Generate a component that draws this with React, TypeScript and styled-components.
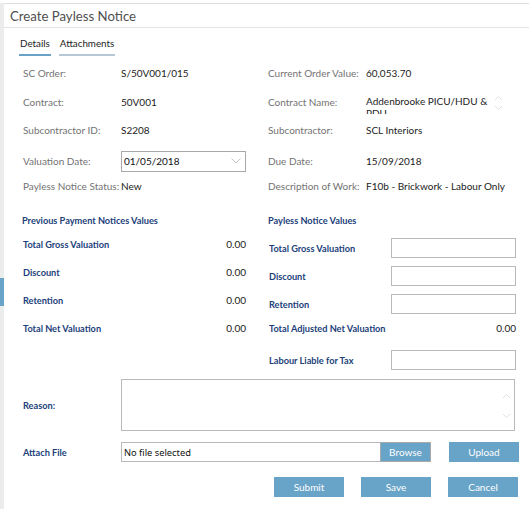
import React from "react";
import styled, { createGlobalStyle } from "styled-components";

const Global = createGlobalStyle`
  html, body { margin: 0; padding: 0; background: #fff; }
  body { font-family: Lato, "Open Sans", sans-serif; width: 529px; height: 509px; overflow: hidden; }
  * { box-sizing: border-box; }
`;

const Page = styled.div`
  position: relative;
  width: 529px;
  height: 509px;
  border-top: 1px solid #fff;
  display: flex;
`;

const SideStrip = styled.div`
  position: relative;
  width: 4px;
  margin-top: 2px;
  background: #ececec;
  flex: none;
`;

const SideTab = styled.div`
  position: absolute;
  left: 0;
  top: 275px;
  width: 4px;
  height: 28px;
  background: #6aa3c8;
`;

const Panel = styled.div`
  flex: 1;
  min-width: 0;
  margin-top: 2px;
  border-top: 1px solid #dedede;
  display: flex;
  flex-direction: column;
`;

const Header = styled.div`
  height: 24px;
  border-bottom: 1px solid #e4e4e4;
  padding-left: 6px;
  display: flex;
  align-items: center;
`;

const Title = styled.h1`
  margin: 0;
  margin-top: 1px;
  font-size: 13.2px;
  font-weight: 400;
  color: #4f4f4f;
`;

const Tabs = styled.div`
  display: flex;
  gap: 8px;
  padding-left: 15px;
  margin-top: 6px;
  height: 22px;
`;

const Tab = styled.div<{ $active?: boolean }>`
  font-size: 9.8px;
  color: #1d1d1d;
  padding: 0 1px 2px;
  border-bottom: 2px solid ${(p) => (p.$active ? "#6aa3c8" : "#b6c8d4")};
  display: flex;
  align-items: center;
  height: 22px;
`;

const InfoRow = styled.div<{ $top: number }>`
  display: flex;
  align-items: center;
  height: 20px;
  margin-top: ${(p) => p.$top}px;
  padding-left: 19px;
`;

const InfoPair = styled.div<{ $width: number }>`
  width: ${(p) => p.$width}px;
  flex: none;
  display: flex;
  align-items: center;
  height: 20px;
`;

const Label = styled.div`
  width: 98px;
  flex: none;
  font-size: 10px;
  color: #737373;
  white-space: nowrap;
`;

const Value = styled.div`
  font-size: 10px;
  color: #1c1c1c;
  white-space: nowrap;
`;

const ScrollBox = styled.div`
  position: relative;
  height: 22px;
  margin-top: 2px;
  width: 140px;
  overflow: hidden;
  font-size: 10px;
  color: #1c1c1c;
  line-height: 12px;
  padding-top: 3px;
  padding-right: 16px;
`;

const Spinner = styled.svg`
  position: absolute;
  right: 3px;
  top: 3px;
`;

const SelectBox = styled.div`
  width: 125px;
  height: 21px;
  border: 1px solid #a9a9a9;
  font-size: 10px;
  color: #111;
  display: flex;
  align-items: center;
  justify-content: space-between;
  padding: 0 4px 0 2px;
`;

const Sections = styled.div`
  display: flex;
  gap: 22px;
  padding-left: 18px;
  margin-top: 14px;
`;

const Column = styled.div<{ $width: number }>`
  width: ${(p) => p.$width}px;
  display: flex;
  flex-direction: column;
`;

const SectionTitle = styled.div`
  font-size: 9.2px;
  font-weight: 700;
  color: #22417a;
  height: 20px;
  display: flex;
  align-items: center;
`;

const FieldRow = styled.div<{ $top: number }>`
  margin-top: ${(p) => p.$top}px;
  height: 20px;
  display: flex;
  align-items: center;
  justify-content: space-between;
`;

const FieldLabel = styled.div`
  font-size: 9.2px;
  font-weight: 700;
  color: #22417a;
  padding-left: 1px;
  white-space: nowrap;
`;

const Amount = styled.div`
  font-size: 10px;
  color: #222;
`;

const TextInput = styled.div`
  width: 125px;
  height: 20px;
  border: 1px solid #b9b9b9;
  background: #fff;
`;

const WideRow = styled.div<{ $top: number; $height: number }>`
  display: flex;
  align-items: center;
  margin-top: ${(p) => p.$top}px;
  height: ${(p) => p.$height}px;
  padding-left: 18px;
`;

const RowLabel = styled.div`
  width: 99px;
  font-size: 9.2px;
  font-weight: 700;
  color: #22417a;
  padding-left: 1px;
`;

const TextArea = styled.div`
  position: relative;
  width: 394px;
  height: 52px;
  border: 1px solid #b9b9b9;
`;

const AreaSpinner = styled.svg`
  position: absolute;
  right: 3px;
  top: 13px;
`;

const FileBox = styled.div`
  width: 259px;
  height: 20px;
  border: 1px solid #b9b9b9;
  border-right: none;
  font-family: "Noto Sans", "Open Sans", sans-serif;
  font-size: 9.3px;
  color: #111;
  display: flex;
  align-items: center;
  padding-left: 2px;
`;

const Button = styled.div<{ $bordered?: boolean; $width?: number }>`
  width: ${(p) => p.$width ?? 70}px;
  height: 20px;
  background: #68a3c8;
  color: #fff;
  font-size: 10px;
  display: flex;
  align-items: center;
  justify-content: center;
  border: ${(p) => (p.$bordered ? "1px solid #a9a9a9" : "none")};
`;

const Spacer = styled.div`
  width: 18px;
  flex: none;
`;

const ButtonBar = styled.div`
  display: flex;
  gap: 17px;
  margin-top: 15px;
  margin-left: 270px;
  height: 20px;
`;

export default function App() {
  return (
    <>
      <Global />
      <Page>
        <SideStrip>
          <SideTab />
        </SideStrip>
        <Panel>
          <Header>
            <Title>Create Payless Notice</Title>
          </Header>
          <Tabs>
            <Tab $active>Details</Tab>
            <Tab>Attachments</Tab>
          </Tabs>

          <InfoRow $top={7}>
            <InfoPair $width={245}>
              <Label>SC Order:</Label>
              <Value>S/50V001/015</Value>
            </InfoPair>
            <InfoPair $width={247}>
              <Label>Current Order Value:</Label>
              <Value>60,053.70</Value>
            </InfoPair>
          </InfoRow>

          <InfoRow $top={9}>
            <InfoPair $width={245}>
              <Label>Contract:</Label>
              <Value>50V001</Value>
            </InfoPair>
            <InfoPair $width={247}>
              <Label>Contract Name:</Label>
              <ScrollBox>
                Addenbrooke PICU/HDU &amp; PDU
                <Spinner width="9" height="16" viewBox="0 0 9 16">
                  <path d="M1 5 L4.5 1.5 L8 5" fill="none" stroke="#e2e2e2" strokeWidth="1" />
                  <path d="M1 11 L4.5 14.5 L8 11" fill="none" stroke="#e2e2e2" strokeWidth="1" />
                </Spinner>
              </ScrollBox>
            </InfoPair>
          </InfoRow>

          <InfoRow $top={8}>
            <InfoPair $width={245}>
              <Label>Subcontractor ID:</Label>
              <Value>S2208</Value>
            </InfoPair>
            <InfoPair $width={247}>
              <Label>Subcontractor:</Label>
              <Value>SCL Interiors</Value>
            </InfoPair>
          </InfoRow>

          <InfoRow $top={11}>
            <InfoPair $width={245}>
              <Label>Valuation Date:</Label>
              <SelectBox>
                01/05/2018
                <svg width="10" height="6" viewBox="0 0 10 6">
                  <path d="M0.5 0.5 L5 5 L9.5 0.5" fill="none" stroke="#c4c4c4" strokeWidth="1" />
                </svg>
              </SelectBox>
            </InfoPair>
            <InfoPair $width={247}>
              <Label>Due Date:</Label>
              <Value>15/09/2018</Value>
            </InfoPair>
          </InfoRow>

          <InfoRow $top={5}>
            <InfoPair $width={245}>
              <Label>Payless Notice Status:</Label>
              <Value>New</Value>
            </InfoPair>
            <InfoPair $width={247}>
              <Label>Description of Work:</Label>
              <Value>F10b - Brickwork - Labour Only</Value>
            </InfoPair>
          </InfoRow>

          <Sections>
            <Column $width={224}>
              <SectionTitle>Previous Payment Notices Values</SectionTitle>
              <FieldRow $top={4}>
                <FieldLabel>Total Gross Valuation</FieldLabel>
                <Amount>0.00</Amount>
              </FieldRow>
              <FieldRow $top={8}>
                <FieldLabel>Discount</FieldLabel>
                <Amount>0.00</Amount>
              </FieldRow>
              <FieldRow $top={8}>
                <FieldLabel>Retention</FieldLabel>
                <Amount>0.00</Amount>
              </FieldRow>
              <FieldRow $top={8}>
                <FieldLabel>Total Net Valuation</FieldLabel>
                <Amount>0.00</Amount>
              </FieldRow>
            </Column>
            <Column $width={248}>
              <SectionTitle>Payless Notice Values</SectionTitle>
              <FieldRow $top={8}>
                <FieldLabel>Total Gross Valuation</FieldLabel>
                <TextInput />
              </FieldRow>
              <FieldRow $top={8}>
                <FieldLabel>Discount</FieldLabel>
                <TextInput />
              </FieldRow>
              <FieldRow $top={8}>
                <FieldLabel>Retention</FieldLabel>
                <TextInput />
              </FieldRow>
              <FieldRow $top={4}>
                <FieldLabel>Total Adjusted Net Valuation</FieldLabel>
                <Amount>0.00</Amount>
              </FieldRow>
              <FieldRow $top={12}>
                <FieldLabel>Labour Liable for Tax</FieldLabel>
                <TextInput />
              </FieldRow>
            </Column>
          </Sections>

          <WideRow $top={9} $height={52}>
            <RowLabel>Reason:</RowLabel>
            <TextArea>
              <AreaSpinner width="9" height="26" viewBox="0 0 9 26">
                <path d="M1 5 L4.5 1.5 L8 5" fill="none" stroke="#e0e0e0" strokeWidth="1" />
                <path d="M1 21 L4.5 24.5 L8 21" fill="none" stroke="#e0e0e0" strokeWidth="1" />
              </AreaSpinner>
            </TextArea>
          </WideRow>

          <WideRow $top={11} $height={20}>
            <RowLabel>Attach File</RowLabel>
            <FileBox>No file selected</FileBox>
            <Button $bordered $width={51}>Browse</Button>
            <Spacer />
            <Button>Upload</Button>
          </WideRow>

          <ButtonBar>
            <Button>Submit</Button>
            <Button>Save</Button>
            <Button>Cancel</Button>
          </ButtonBar>
        </Panel>
      </Page>
    </>
  );
}
